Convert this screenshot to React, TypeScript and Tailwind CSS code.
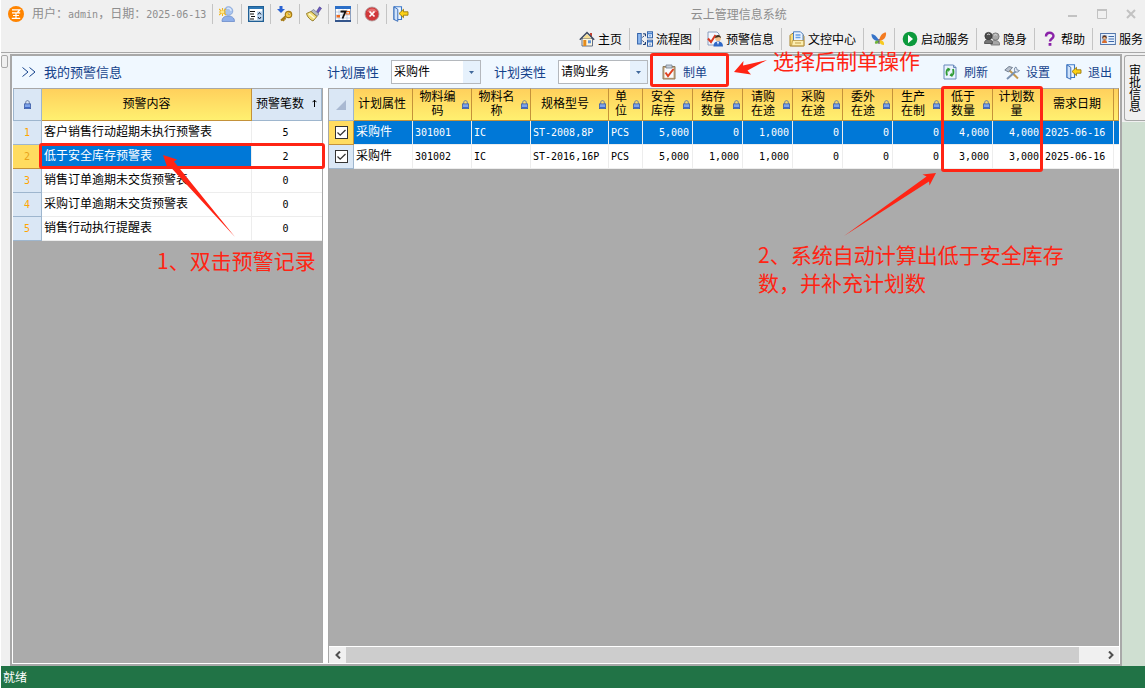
import type { ReactNode } from 'react';

const cjk = "font-['Noto_Sans_CJK_SC',sans-serif]";
const mono = "font-['DejaVu_Sans_Mono','Noto_Sans_CJK_SC',monospace] text-[10px]";

function Icon({ children }: { children: ReactNode }) {
  return (
    <svg viewBox="0 0 16 16" className="w-4 h-4 shrink-0" fill="none" aria-hidden="true">
      {children}
    </svg>
  );
}

const LogoIcon = () => (
  <Icon>
    <circle cx="8" cy="8" r="8" fill="#ff8400" />
    <path d="M4 3.800h7.800L9.500 6.500M4 6.900h8.200M8 7v5M5 9.500h6M3.800 12.300h8.400" stroke="#fff" strokeWidth="1.200" />
  </Icon>
);

const UserStarIcon = () => (
  <Icon>
    <path d="M3 15.500c0-4 2.500-5.500 6-5.500s6.500 1.500 6.500 5.500z" fill="#8fb0ea" stroke="#6b8cc9" strokeWidth=".8" />
    <circle cx="9.500" cy="5" r="4.300" fill="#a9c4ee" stroke="#7f9fd6" strokeWidth=".8" />
    <path d="M8 2.500c2-1 4 .5 4 2.500" stroke="#dce9fb" strokeWidth="1.300" />
    <path d="M0 3l7 6M7 3L0 9M3.500 2v8M0 6h7" stroke="#f0b61e" strokeWidth="1.100" />
    <rect x="2" y="4.500" width="3" height="3" fill="#ffe88a" />
  </Icon>
);

const FormIcon = () => (
  <Icon>
    <rect x=".7" y=".7" width="14.600" height="14.600" fill="#fff" stroke="#1f5f95" strokeWidth="1.400" />
    <path d="M1 2h14" stroke="#2f78b5" strokeWidth="2" />
    <path d="M2 5.500h5M2 8h4M3 10.500h4M2 13h4" stroke="#111" strokeWidth="1.200" />
    <rect x="9" y="5.500" width="5" height="8.500" fill="#bed7f3" />
    <path d="M10 8.500l1.500-2 1.500 2M10 11l1.500 2 1.500-2" stroke="#123" strokeWidth="1" />
  </Icon>
);

const KeyIcon = () => (
  <Icon>
    <path d="M2.500 0h3v3H8L4 7 0 3h2.500z" fill="#2a62d2" />
    <path d="M9.500 9.500L4 14.500M5.500 13l1.500 2M7 11.500l1.500 2" stroke="#a67a14" strokeWidth="2" />
    <circle cx="11.500" cy="8.500" r="3.200" fill="#f7cd4a" stroke="#a67a14" strokeWidth="1.200" />
    <circle cx="12.200" cy="7.700" r="1" fill="#fff" stroke="#8a6410" strokeWidth=".6" />
  </Icon>
);

const BrushIcon = () => (
  <Icon>
    <path d="M10.500 5.500L13.500.8l2 1.500-3.500 5z" fill="#6a5ac0" stroke="#463b86" strokeWidth=".6" />
    <path d="M7.500 3.500l5.500 4.500-2 2.500-6-5z" fill="#b5bac5" stroke="#6f7686" strokeWidth=".7" />
    <path d="M5 5.500l6 5L7 15C4.500 14 1 11 .5 7.500z" fill="#f1df7c" stroke="#8f7520" strokeWidth=".9" />
    <path d="M3 7.800l5.500 4.500" stroke="#fffbe0" strokeWidth="1.400" />
  </Icon>
);

const CalendarIcon = () => (
  <Icon>
    <rect x=".5" y=".5" width="15" height="15" fill="#fff" stroke="#8da0bf" />
    <path d="M0 1.500h16" stroke="#2c6fc7" strokeWidth="3" />
    <path d="M1 6h14M1 9h14M1 12h14M4 3.500v12M8 3.500v12M12 3.500v12" stroke="#b7c8e2" strokeWidth=".8" />
    <rect x="11" y="5.500" width="3.500" height="2.500" stroke="#f06a1c" />
    <rect x="1.500" y="9" width="3.500" height="2.500" fill="#f06a1c" />
    <path d="M5.500 5.500h5L7.500 12.500" stroke="#111" strokeWidth="1.800" />
    <path d="M0 15h16" stroke="#35568c" strokeWidth="2" />
  </Icon>
);

const CloseRoundIcon = () => (
  <Icon>
    <circle cx="8" cy="8" r="7" fill="#d0383a" stroke="#a9a0a0" strokeWidth=".8" />
    <path d="M3 5.500c2-4 8-4 10 0-3 1.500-7 1.500-10 0z" fill="#e57070" />
    <path d="M5.500 5.500l5 5M10.500 5.500l-5 5" stroke="#fff" strokeWidth="1.700" />
  </Icon>
);

const ExitIcon = () => (
  <Icon>
    <path d="M1 .8h7.500v12.700H1z" fill="#eef6ff" stroke="#3c79c9" strokeWidth="1.100" />
    <path d="M1 .8l3.800 2.500v12L1 13.500z" fill="#cfe3fa" stroke="#2a62b4" strokeWidth=".9" />
    <path d="M6 7.500l4.500-4.200v2.500H15v3.400h-4.500v2.500z" fill="#fcd116" stroke="#9b7a10" strokeWidth=".9" />
  </Icon>
);

const HomeIcon = () => (
  <Icon>
    <path d="M3 7.500h10.500V15H3z" fill="#fdf7e0" stroke="#53617c" strokeWidth=".9" />
    <path d="M11 2h2v4h-2z" fill="#c64331" />
    <path d="M3.500 7.500L8 3l4.500 4.500z" fill="#f6dd92" />
    <path d="M.8 8.800L8 1.500l7.200 7.300" stroke="#3d4a62" strokeWidth="1.500" />
    <rect x="4.300" y="9" width="3" height="6" fill="#e48b1c" />
    <rect x="9" y="9.300" width="3" height="3" fill="#5e93db" />
  </Icon>
);

const FlowIcon = () => (
  <Icon>
    <rect x=".6" y="2.500" width="3.600" height="10.500" fill="#8fbaf0" stroke="#3262a8" />
    <path d="M5.500 6.500l2.500-3M5.500 9.500l3 3.500" stroke="#203e74" strokeWidth="1" strokeDasharray="2 1" />
    <path d="M6 2.800h2.500v2.500M6 13.500h2.500v-2.500" stroke="#203e74" strokeWidth="1" />
    <rect x="10.500" y=".8" width="5" height="6" fill="#d7e8fc" stroke="#3262a8" />
    <path d="M10.500 2.500h5M10.500 10.800h5" stroke="#4b83cf" strokeWidth="1.600" />
    <rect x="10.500" y="9.200" width="5" height="6" fill="none" stroke="#3262a8" />
    <path d="M12 4.800h2M12 13.200h2" stroke="#5e90d6" />
  </Icon>
);

const WarnUserIcon = () => (
  <Icon>
    <path d="M1 1h9l2 2v11H1z" fill="#f4f8ff" stroke="#7f93b5" strokeWidth=".9" />
    <path d="M1 7.500l3 3.500L8.500 4" stroke="#da3a22" strokeWidth="2" />
    <path d="M6.500 15.500c0-4 2-5 4.500-5s5 1 5 5z" fill="#2f68c7" />
    <circle cx="11" cy="7.500" r="2.800" fill="#f0c18c" />
    <path d="M8 7c0-4 6-4 6 0l-2-1z" fill="#41301f" />
    <path d="M10 11l1 3 1-3z" fill="#fff" />
  </Icon>
);

const DocsIcon = () => (
  <Icon>
    <path d="M1 4.500l2-2h10l2 3V15H1z" fill="#f9dc7a" stroke="#a7822a" />
    <path d="M4.500.8h7l2.500 2.500V11h-9.500z" fill="#e9f3ff" stroke="#4c7fc2" />
    <path d="M6.500 4h5M6.500 6.500h5" stroke="#67a0e4" strokeWidth="1.300" />
    <path d="M3.500 9.500h11.300v5.300H2.500z" fill="#fceeb0" stroke="#b8923a" strokeWidth=".8" />
    <path d="M6 12h6" stroke="#c29f48" />
  </Icon>
);

const ButterflyIcon = () => (
  <Icon>
    <path d="M7.800 9C5.500 5 3 3 .5 3c0 4 2 6.500 6 7z" fill="#3673c8" />
    <path d="M8.200 9C9.500 3.500 12 1.500 15 1.500c.5 4-1.500 7-5.500 8.500z" fill="#f47b20" />
    <path d="M7.300 9.500c-3 0-3.800 1.300-3.300 3 2 .8 4 0 4.300-2.500z" fill="#6fb43b" />
    <path d="M8.500 9.500c3.500-.5 5 1.500 4.500 4.500-2.800 0-4.500-1.500-4.800-4.500z" fill="#f7ca1f" />
    <path d="M8 8v5" stroke="#4b3d6a" />
  </Icon>
);

const PlayIcon = () => (
  <Icon>
    <circle cx="8" cy="8" r="7.300" fill="#0c9a3c" />
    <path d="M6 3.800L11 8l-5 4.200z" fill="#fff" />
  </Icon>
);

const HideIcon = () => (
  <Icon>
    <path d="M7 14c0-3.500 1.500-4.500 4-4.500s4.700 1 4.700 4.500z" fill="#a7a7a7" stroke="#6b6b6b" strokeWidth=".8" />
    <circle cx="11.500" cy="5.500" r="3.600" fill="#a9a9a9" stroke="#707070" strokeWidth=".8" />
    <path d="M.5 12.500c0-3 1.500-4 4-4s4 1 4 4z" fill="#777" stroke="#444" strokeWidth=".8" />
    <circle cx="4.500" cy="5" r="3.600" fill="#4c4c4c" stroke="#333" strokeWidth=".8" />
    <path d="M3 4c1-1.200 2-1.200 3 0M10 4.500c1-1.200 2-1.200 3 0" stroke="#ddd" />
  </Icon>
);

const HelpIcon = () => (
  <Icon>
    <path d="M4 5.500C4 .5 11.500.8 11.500 5c0 2.800-3.500 2.700-3.500 5.500" stroke="#8a22a8" strokeWidth="2.400" />
    <rect x="6.600" y="12" width="2.800" height="2.800" fill="#8a22a8" />
  </Icon>
);

const CardIcon = () => (
  <Icon>
    <rect x=".6" y="2.500" width="14.800" height="11" fill="#e7f1fd" stroke="#5477ac" />
    <rect x="2" y="4" width="5" height="8" fill="#b9d0ee" />
    <circle cx="4.500" cy="6.500" r="2.200" fill="#5a3320" />
    <circle cx="4.500" cy="7.200" r="1.300" fill="#f0b98a" />
    <path d="M2 12c0-4 5-4 5 0z" fill="#d96d2c" />
    <path d="M8.500 5.500h5.500M8.500 8h5.500M8.500 10.500h5.500" stroke="#3d68a9" />
  </Icon>
);

const ClipIcon = () => (
  <Icon>
    <path d="M2 2.500h12V15H2z" fill="#c9ab7e" stroke="#8d7b60" />
    <path d="M3.500 4h9v9.800h-9z" fill="#f7faff" />
    <path d="M5 1h6v3H5z" fill="#c7cfda" stroke="#75808f" strokeWidth=".8" />
    <path d="M4.500 8.500L7 12l5.500-7" stroke="#df4020" strokeWidth="2" />
  </Icon>
);

const RefreshIcon = () => (
  <Icon>
    <path d="M2 1h9.500L14 3.500V15H2z" fill="#eaf3ff" stroke="#6688ba" />
    <path d="M11.500 1v2.500H14" stroke="#6688ba" />
    <path d="M6.500 5c-2 .5-2.500 3-1.500 6.500M9.500 11.500c2-.5 2.500-3 1.500-6.500" stroke="#2f9b33" strokeWidth="1.900" />
    <path d="M5.500 3.500L8.500 5l-2 3zM10.500 13L7.500 11.500l2-3z" fill="#2f9b33" />
  </Icon>
);

const ToolsIcon = () => (
  <Icon>
    <path d="M5 6l9 8.500" stroke="#c29a52" strokeWidth="2" />
    <path d="M.8 6L5 2.500l3.500 1L4.500 8z" fill="#b9c2ce" stroke="#5d6b7d" strokeWidth=".8" />
    <path d="M11.500 7.500L3 15" stroke="#7b93b3" strokeWidth="2" />
    <path d="M12 3c-2 .5-2 3.500-1 4.500s3.500 1 4.500-1L13.200 6l-.5-1.500z" fill="#e2eaf4" stroke="#607694" strokeWidth=".8" />
  </Icon>
);

const LockIcon = () => (
  <svg viewBox="0 0 7 9" className="w-[7px] h-[9px] shrink-0" fill="none" aria-hidden="true">
    <path d="M1.700 4V2.500c0-2.500 3.600-2.500 3.600 0V4" stroke="#66779a" />
    <rect x=".4" y="3.900" width="6.200" height="4.700" fill="#7ea4ea" stroke="#3c5ca6" strokeWidth=".8" />
    <path d="M1 7.500h5" stroke="#3f69c4" />
  </svg>
);

const quickTools = [
  { name: '用户', icon: <UserStarIcon /> },
  { name: '表单', icon: <FormIcon /> },
  { name: '权限', icon: <KeyIcon /> },
  { name: '清理', icon: <BrushIcon /> },
  { name: '日历', icon: <CalendarIcon /> },
  { name: '关闭', icon: <CloseRoundIcon /> },
  { name: '退出', icon: <ExitIcon /> },
];

const navItems = [
  { label: '主页', icon: <HomeIcon /> },
  { label: '流程图', icon: <FlowIcon /> },
  { label: '预警信息', icon: <WarnUserIcon /> },
  { label: '文控中心', icon: <DocsIcon /> },
  { label: '', icon: <ButterflyIcon /> },
  { label: '启动服务', icon: <PlayIcon /> },
  { label: '隐身', icon: <HideIcon /> },
  { label: '帮助', icon: <HelpIcon /> },
  { label: '服务', icon: <CardIcon /> },
];

const alerts = [
  { name: '客户销售行动超期未执行预警表', count: 5 },
  { name: '低于安全库存预警表', count: 2 },
  { name: '销售订单逾期未交货预警表', count: 0 },
  { name: '采购订单逾期未交货预警表', count: 0 },
  { name: '销售行动执行提醒表', count: 0 },
];

const columns = [
  { title: '计划属性', width: 'w-[59px]', lock: false },
  { title: '物料编\n码', width: 'w-[59px]', lock: true },
  { title: '物料名\n称', width: 'w-[59px]', lock: true },
  { title: '规格型号', width: 'w-[78px]', lock: true },
  { title: '单\n位', width: 'w-[34px]', lock: true },
  { title: '安全\n库存', width: 'w-[50px]', lock: true, num: true },
  { title: '结存\n数量', width: 'w-[50px]', lock: true, num: true },
  { title: '请购\n在途', width: 'w-[50px]', lock: true, num: true },
  { title: '采购\n在途', width: 'w-[50px]', lock: true, num: true },
  { title: '委外\n在途', width: 'w-[50px]', lock: true, num: true },
  { title: '生产\n在制', width: 'w-[50px]', lock: true, num: true },
  { title: '低于\n数量', width: 'w-[50px]', lock: true, num: true },
  { title: '计划数\n量', width: 'w-[50px]', lock: false, num: true },
  { title: '需求日期', width: 'w-[71px]', lock: false },
];

const rows = [
  ['采购件', '301001', 'IC', 'ST-2008,8P', 'PCS', '5,000', '0', '1,000', '0', '0', '0', '4,000', '4,000', '2025-06-16'],
  ['采购件', '301002', 'IC', 'ST-2016,16P', 'PCS', '5,000', '1,000', '1,000', '0', '0', '0', '3,000', '3,000', '2025-06-16'],
];

const goldHead = 'bg-linear-to-b from-[#ffd05c] to-[#fff070] border-r border-b border-[#c4923a]';
const blueHead = 'bg-[#dae7f5] border-r border-b border-[#9eb6ce]';

function FilterSelect({ id, label, value }: { id: string; label: string; value: string }) {
  return (
    <div className="flex items-center gap-3">
      <label htmlFor={id} className="text-[13px] text-[#15428b] whitespace-nowrap">{label}</label>
      <div className="relative">
        <select
          id={id}
          defaultValue={value}
          className="block w-[90px] h-6 pl-[2px] pb-[2px] appearance-none bg-white border border-[#b4b8bd] text-black outline-none"
        >
          <option>{value}</option>
        </select>
        <span className="absolute right-px inset-y-px w-[17px] flex items-center justify-center bg-[#e6f1fc] pointer-events-none">
          <svg viewBox="0 0 5 3" className="w-[5px] h-[3px]">
            <path d="M0 0h5L2.500 3z" fill="#41699c" />
          </svg>
        </span>
      </div>
    </div>
  );
}

function ToolButton({ label, icon }: { label: string; icon: ReactNode }) {
  return (
    <button type="button" className="flex items-center gap-[6px] text-[#15428b] whitespace-nowrap">
      {icon}
      <span className="pb-px">{label}</span>
    </button>
  );
}

function AppHeader() {
  return (
    <header className="border-b border-[#a8a8a8]">
      <div className="flex items-center h-7">
        <div className="flex items-center gap-2 pl-[7px] pr-[6px] text-[#8e8e8e]">
          <LogoIcon />
          <p className="pb-px whitespace-nowrap">
            用户：<span className={mono}>admin</span>，日期：<span className={mono}>2025-06-13</span>
          </p>
        </div>
        {quickTools.map((t) => (
          <button key={t.name} type="button" aria-label={t.name} className="px-[6px] h-5 border-l border-[#c4c4c4]">
            {t.icon}
          </button>
        ))}
        <h1 className="flex-1 pr-[6px] text-center text-[#8e8e8e] whitespace-nowrap">云上管理信息系统</h1>
        <div className="flex gap-[19px] pr-[9px] text-[#c2c2c2]">
          <button type="button" aria-label="最小化">
            <svg viewBox="0 0 10 10" className="w-[10px] h-[10px]"><path d="M0 7h9" stroke="currentColor" strokeWidth="2" /></svg>
          </button>
          <button type="button" aria-label="最大化">
            <svg viewBox="0 0 10 10" className="w-[10px] h-[10px]" fill="none">
              <path d="M.5 1v8.500h9V1" stroke="currentColor" />
              <path d="M0 1h10" stroke="currentColor" strokeWidth="2" />
            </svg>
          </button>
          <button type="button" aria-label="关闭窗口">
            <svg viewBox="0 0 10 10" className="w-[10px] h-[10px]"><path d="M1 1l8 8M9 1L1 9" stroke="currentColor" strokeWidth="2" /></svg>
          </button>
        </div>
      </div>
      <nav className="flex justify-end h-6 pr-[2px]">
        {navItems.map((n, i) => (
          <a
            key={i}
            href="#"
            aria-label={n.label || '消息'}
            className="flex items-center gap-[3px] h-[22px] px-[7px] border-l border-[#c4c4c4] first:border-l-0 last:pr-0 whitespace-nowrap"
          >
            {n.icon}
            {n.label}
          </a>
        ))}
      </nav>
    </header>
  );
}

function AlertTable() {
  return (
    <section className="w-[310px] shrink-0 bg-[#ababab] border-r border-[#a8a8a8]">
      <table className="w-full table-fixed border-separate border-spacing-0">
        <thead>
          <tr className="h-[33px]">
            <th className={`w-[29px] border-t border-l border-t-[#a8a8a8] ${blueHead}`}>
              <span className="flex justify-center"><LockIcon /></span>
            </th>
            <th className={`p-0 pb-[3px] border-t border-t-[#a8a8a8] font-normal ${goldHead}`}>预警内容</th>
            <th className={`w-[70px] p-0 pb-[3px] border-t border-t-[#a8a8a8] font-normal ${blueHead}`}>
              <span className="flex items-center justify-between px-1">
                预警笔数
                <svg viewBox="0 0 5 8" className="w-[5px] h-2" fill="none">
                  <path d="M2.500 8V1M.5 3.200l2-2 2 2" stroke="#000" />
                </svg>
              </span>
            </th>
          </tr>
        </thead>
        <tbody>
          {alerts.map((a, i) => {
            const active = i === 1;
            return (
              <tr key={a.name} className="h-6">
                <td className={`p-0 text-center border-r border-b ${mono} ${active ? 'bg-[#ffdc60] border-[#c4923a] text-[#e8a21c]' : 'bg-[#dae7f5] border-[#9eb6ce] text-[#ffa500]'}`}>
                  {i + 1}
                </td>
                <td className={`p-0 pl-[2px] pb-[3px] border-r border-b border-[#ededed] whitespace-nowrap ${active ? 'bg-[#0078d7] text-white' : 'bg-white'}`}>
                  {a.name}
                </td>
                <td className={`p-0 pr-[3px] text-center bg-white border-b border-[#ededed] ${mono}`}>{a.count}</td>
              </tr>
            );
          })}
        </tbody>
      </table>
    </section>
  );
}

function MaterialTable() {
  return (
    <section className="flex-1 min-w-0 flex flex-col bg-[#ababab] border-l border-[#a8a8a8]">
      <div className="flex-1 overflow-hidden">
        <table className="w-full min-w-[790px] table-fixed border-separate border-spacing-0">
          <thead>
            <tr className="h-[33px]">
              <th className={`w-[25px] border-t border-t-[#a8a8a8] ${blueHead}`}>
                <svg viewBox="0 0 10 10" className="w-[10px] h-[10px] mx-auto"><path d="M10 0v10H0z" fill="#a9b9d2" /></svg>
              </th>
              {columns.map((c) => (
                <th key={c.title} className={`p-0 border-t border-t-[#a8a8a8] font-normal ${c.width} ${goldHead}`}>
                  <div className="flex items-center pr-[2px] leading-[14px]">
                    <span className="flex-1 pb-[3px] whitespace-pre">{c.title}</span>
                    {c.lock && <LockIcon />}
                  </div>
                </th>
              ))}
              <th className={`p-0 border-t border-t-[#a8a8a8] ${goldHead}`} />
            </tr>
          </thead>
          <tbody>
            {rows.map((r, i) => (
              <tr key={r[1]} className={`h-6 ${i === 0 ? 'bg-[#0078d7] text-white' : 'bg-white'}`}>
                <td className={`p-0 border-r border-b ${i === 0 ? 'bg-[#ffdc60] border-[#c4923a]' : 'bg-[#dae7f5] border-[#9eb6ce]'}`}>
                  <span className="relative block w-[13px] h-[13px] mx-auto">
                    <input
                      type="checkbox"
                      defaultChecked
                      aria-label={`选择 ${r[1]}`}
                      className="peer block w-[13px] h-[13px] appearance-none bg-white border border-[#333]"
                    />
                    <svg viewBox="0 0 13 13" className="absolute inset-0 w-[13px] h-[13px] pointer-events-none invisible peer-checked:visible" fill="none">
                      <path d="M2.500 6.500l2.700 2.700L10.500 4" stroke="#333" strokeWidth="1.300" />
                    </svg>
                  </span>
                </td>
                {r.map((v, j) => (
                  <td
                    key={j}
                    className={`p-0 border-r border-b border-[#ededed] whitespace-nowrap ${j === 0 ? 'pb-[3px]' : mono} ${columns[j].num ? 'text-right pr-[3px]' : 'pl-[2px]'}`}
                  >
                    {v}
                  </td>
                ))}
                <td className="p-0 border-b border-[#ededed]" />
              </tr>
            ))}
          </tbody>
        </table>
      </div>
      <div className="flex h-[17px] border-t border-white bg-[#f0f0f0]">
        <button type="button" aria-label="向左滚动" className="w-[17px] flex items-center justify-center">
          <svg viewBox="0 0 6 8" className="w-[6px] h-2" fill="none"><path d="M5 .5L1.500 4 5 7.500" stroke="#505050" strokeWidth="2" /></svg>
        </button>
        <div className="flex-1 flex">
          <div className="w-[97%] bg-[#cdcdcd]" />
        </div>
        <button type="button" aria-label="向右滚动" className="w-[17px] flex items-center justify-center">
          <svg viewBox="0 0 6 8" className="w-[6px] h-2" fill="none"><path d="M1 .5L4.500 4 1 7.500" stroke="#505050" strokeWidth="2" /></svg>
        </button>
      </div>
    </section>
  );
}

// Red guide marks floating over the window
function Annotations() {
  const frame = 'absolute border-[3px] border-[#ff2414] rounded-[3px]';
  const note = 'absolute text-[21px] leading-7 text-[#ff2414] whitespace-nowrap';
  return (
    <div className="absolute inset-0 pointer-events-none">
      <div className={`${frame} left-[39px] top-[143px] w-[286px] h-[26px]`} />
      <div className={`${frame} left-[650px] top-[53px] w-[79px] h-[34px]`} />
      <div className={`${frame} left-[941px] top-[86px] w-[102px] h-[86px]`} />
      <svg className="absolute left-[162px] top-[154px] w-[75px] h-[85px]" viewBox="0 0 75 85">
        <path d="M1 1l14 4.500-3 2L73 83 8 12.500 5.800 15z" fill="#ff2414" />
      </svg>
      <svg className="absolute left-[843px] top-[172px] w-[94px] h-[65px]" viewBox="0 0 94 65">
        <path d="M93 1L79.500 2.500l4 2L1 64 86 9.500l.5 4z" fill="#ff2414" />
      </svg>
      <svg className="absolute left-[733px] top-[59px] w-[35px] h-[18px]" viewBox="0 0 35 18">
        <path d="M1 13L10.500 2 10 6.500 34 1 14.500 11.500l3.500 4z" fill="#ff2414" />
      </svg>
      <p className={`${note} left-[773px] top-[46px]`}>选择后制单操作</p>
      <p className={`${note} left-[157px] top-[246px]`}>1、双击预警记录</p>
      <p className={`${note} left-[758px] top-[240px]`}>
        2、系统自动计算出低于安全库存
        <br />
        数，并补充计划数
      </p>
    </div>
  );
}

export default function App() {
  return (
    <div className={`relative min-h-screen flex flex-col pl-px pb-px bg-white text-[12px] leading-4 text-black ${cjk}`}>
      <div className="flex-1 flex flex-col bg-[#f0f0f0]">
        <AppHeader />
        <div className="flex-1 flex pt-px">
          <aside className="w-[9px] shrink-0 pt-px">
            <div className="w-[7px] h-[13px] border border-[#a8a8a8] rounded-[2px]" />
          </aside>

          <main className="flex-1 min-w-0 flex flex-col border-2 border-[#a8a8a8] bg-white">
            <div className="flex items-center h-8 bg-[#f0f8ff]">
              <h2 className="w-[315px] shrink-0 flex items-center gap-2 pl-[10px] text-[13px] text-[#15428b]">
                <svg viewBox="0 0 14 10" className="w-[14px] h-[10px]" fill="none">
                  <path d="M.5.5L6 5 .5 9.500M7.500.5L13 5l-5.500 4.500" stroke="#15428b" />
                </svg>
                我的预警信息
              </h2>
              <div className="flex-1 flex items-center gap-[13px] pr-2">
                <FilterSelect id="plan-attr" label="计划属性" value="采购件" />
                <FilterSelect id="plan-kind" label="计划类性" value="请购业务" />
                <ToolButton label="制单" icon={<ClipIcon />} />
                <div className="ml-auto flex gap-4">
                  <ToolButton label="刷新" icon={<RefreshIcon />} />
                  <ToolButton label="设置" icon={<ToolsIcon />} />
                  <ToolButton label="退出" icon={<ExitIcon />} />
                </div>
              </div>
            </div>
            <div className="flex-1 flex gap-[5px] pl-px pr-px pb-px">
              <AlertTable />
              <MaterialTable />
            </div>
          </main>

          <aside className="w-[23px] shrink-0 flex flex-col">
            <div className="pt-px pb-px pl-[2px]">
              <button type="button" className="w-full h-[66px] px-1 border border-r-0 border-[#a8a8a8] rounded-l-[3px] leading-3">
                审批信息
              </button>
            </div>
            <div className="flex-1 bg-[#cfdfd1]" />
          </aside>
        </div>
        <footer className="h-[22px] pl-[2px] flex items-center bg-[#217346] text-white">就绪</footer>
      </div>
      <Annotations />
    </div>
  );
}
